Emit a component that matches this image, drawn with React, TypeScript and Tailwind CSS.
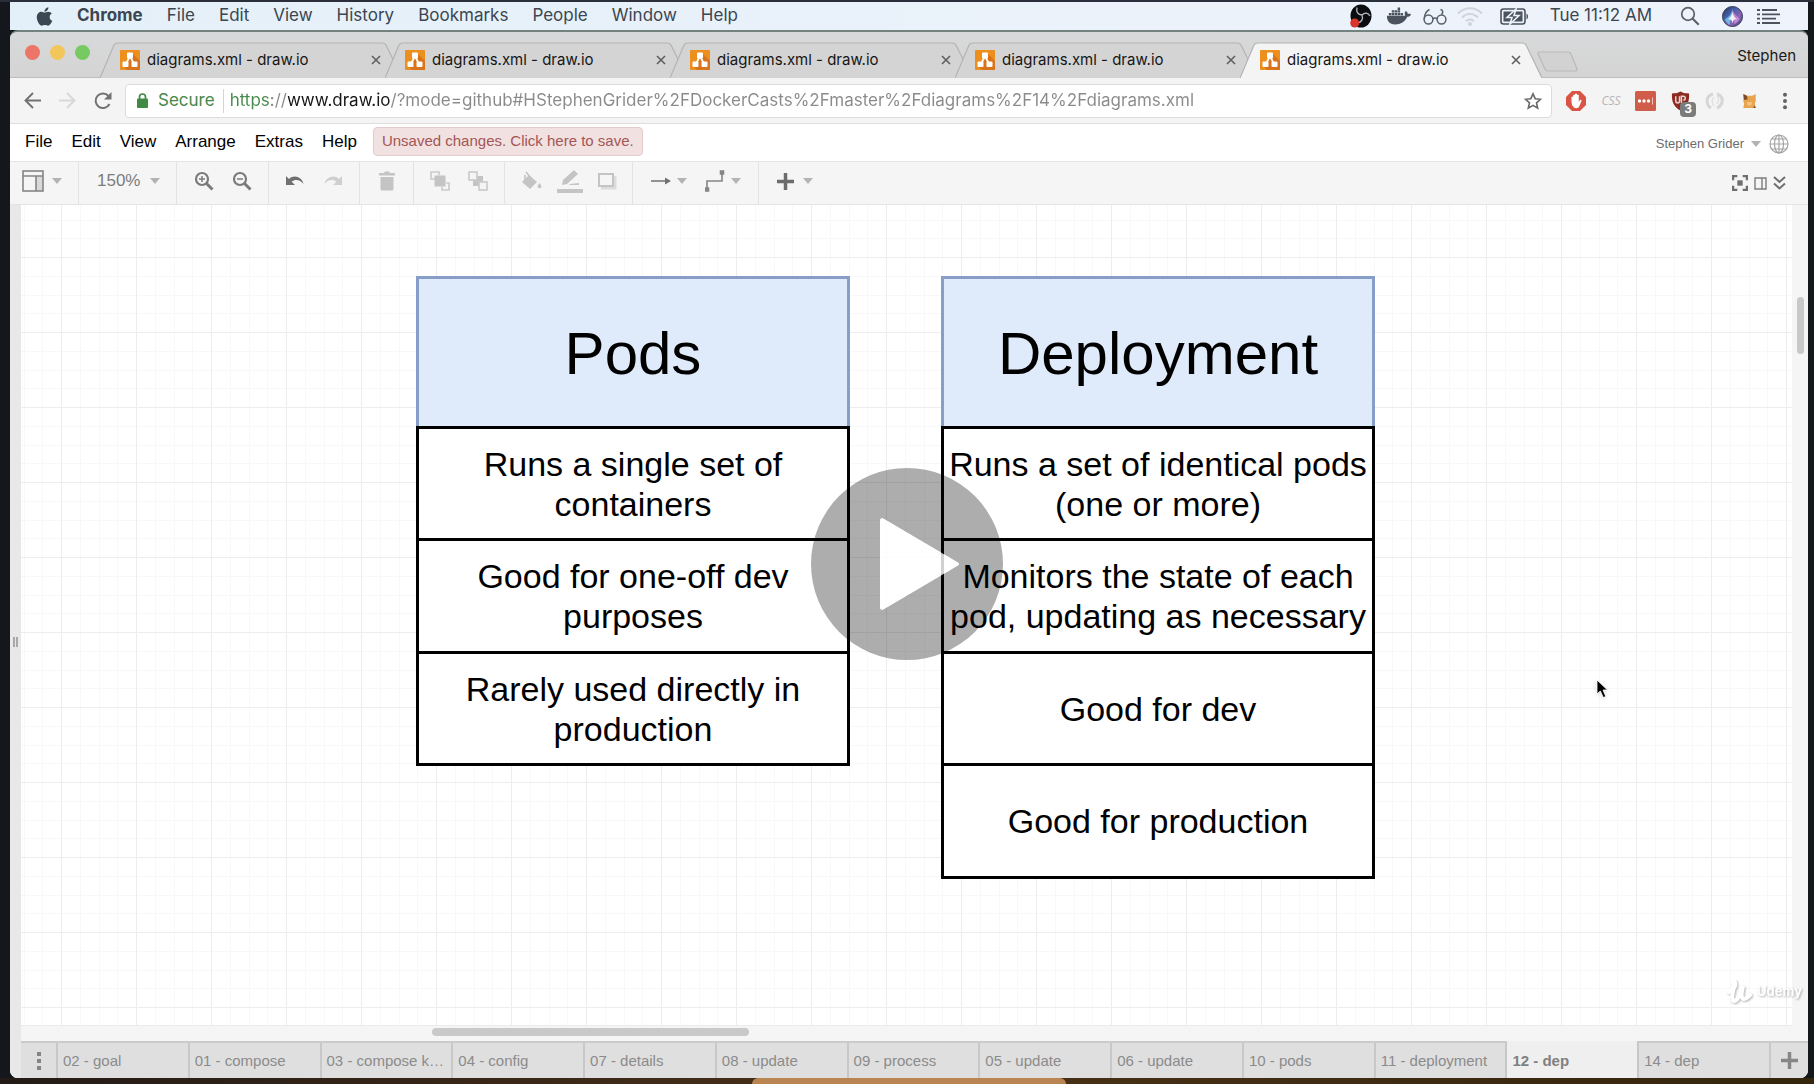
import React from "react";
import { FaApple, FaDocker } from "react-icons/fa";

const SANS = "font-['Liberation_Sans',Arial,sans-serif]";
const SYS = "font-[Inter,'Liberation_Sans',sans-serif]";

const systemMenus = ["File", "Edit", "View", "History", "Bookmarks", "People", "Window", "Help"];
const editorMenus = ["File", "Edit", "View", "Arrange", "Extras", "Help"];
const browserTabs = [1, 2, 3, 4, 5];
const pages = [
  "02 - goal",
  "01 - compose",
  "03 - compose k…",
  "04 - config",
  "07 - details",
  "08 - update",
  "09 - process",
  "05 - update",
  "06 - update",
  "10 - pods",
  "11 - deployment",
  "12 - dep",
  "14 - dep",
];

function ObsIcon() {
  return (
    <svg width="22" height="24" viewBox="0 0 22 24">
      <ellipse cx="11" cy="12" rx="10.5" ry="11.500" fill="#0b0c10" />
      <path
        d="M7 3.500c-1 4.500 1 7.500 5 7.500M12 11c3-3 6-2.500 8 1M12 11c1.500 4-.5 7-4 8"
        stroke="#b9bdc4"
        strokeWidth="1.300"
        fill="none"
      />
      <circle cx="4.700" cy="19" r="4.500" fill="#d8362a" />
    </svg>
  );
}

function GlassesIcon() {
  return (
    <svg width="24" height="17" viewBox="0 0 24 17" fill="none" stroke="#59626c" strokeWidth="1.500">
      <circle cx="5.500" cy="11.500" r="4.400" />
      <circle cx="18.500" cy="11.500" r="4.400" />
      <path d="M9.900 11c1-1.500 3.200-1.500 4.200 0M1.200 11C1.500 7 3 3 6.500 1.500M18.500 7C20.500 4 20 2 17.500 1.500" />
    </svg>
  );
}

function WifiIcon() {
  return (
    <svg width="26" height="20" viewBox="0 0 26 20" fill="none" stroke="#cfd4dc" strokeWidth="2">
      <path d="M1 7.500c7-7 17-7 24 0M5 11.500c5-4.600 11-4.600 16 0M9 15.200c2.500-2.200 5.500-2.200 8 0" />
      <circle cx="13" cy="18" r="1" fill="#cfd4dc" />
    </svg>
  );
}

function BatteryIcon() {
  return (
    <svg width="30" height="17" viewBox="0 0 30 17">
      <rect x="1" y="1" width="24" height="15" rx="2.500" fill="none" stroke="#4a535e" strokeWidth="1.600" />
      <rect x="3.500" y="3.500" width="19" height="10" fill="#4a535e" />
      <path d="M26.500 5.500v6c2-.8 2-5.200 0-6z" fill="#4a535e" />
      <path d="m16 1-9 8.500h5L10 16l9-8.500h-5z" fill="#4a535e" stroke="#edf2f9" strokeWidth="1.600" />
    </svg>
  );
}

function SearchIcon() {
  return (
    <svg width="20" height="20" viewBox="0 0 20 20" fill="none" stroke="#59626c" strokeWidth="1.700">
      <circle cx="8" cy="8" r="6.300" />
      <path d="m12.700 12.700 6 6" strokeWidth="2.200" />
    </svg>
  );
}

function SiriIcon() {
  return (
    <svg width="21" height="21" viewBox="0 0 22 22">
      <defs>
        <linearGradient id="siri" x1="0" y1="0" x2="1" y2="1">
          <stop offset="0" stopColor="#2a2f52" />
          <stop offset=".35" stopColor="#3f5fa8" />
          <stop offset=".65" stopColor="#8f62b8" />
          <stop offset="1" stopColor="#2c3f78" />
        </linearGradient>
      </defs>
      <circle cx="11" cy="11" r="10.500" fill="url(#siri)" stroke="#33374d" />
      <path d="M11 3c-1 5-3 8-8 11 1 3 3 5 5 6 0-3 1-5 3-8z" fill="#6fc4e8" opacity=".85" />
      <path d="M11 3c1 5 4 8 8 10-2 3-4 5-6 6 0-3-1-5-2-7z" fill="#cf8fd6" opacity=".8" />
      <path d="M11 6c.7 4 2 6 5 8-3-.5-4 0-5 4-1-4-2-4.500-5-4 3-2 4.300-4 5-8z" fill="#f3eefc" />
    </svg>
  );
}

function ListIcon() {
  return (
    <svg width="23" height="17" viewBox="0 0 23 17" stroke="#4a535e" strokeWidth="1.800">
      <path d="M5 2h15M5 6.300h18M5 10.700h14M5 15h18" />
      <path d="M0 2h3M0 6.300h3M0 10.700h3M0 15h3" />
    </svg>
  );
}

function DrawioIcon() {
  return (
    <svg width="20" height="20" viewBox="0 0 20 20" className="shrink-0">
      <rect width="20" height="20" rx="1" fill="#ec8f1c" />
      <path d="m12 3 8 8v9H7l-4-4 6-6z" fill="#d9741a" />
      <path d="M10 6 6 14M10 6l4 8" stroke="#fff" strokeWidth="1.700" />
      <rect x="7" y="2.500" width="6" height="6" rx="1" fill="#fff" />
      <rect x="2.500" y="11.500" width="6" height="5.500" rx="1" fill="#fff" />
      <rect x="11.500" y="11.500" width="6" height="5.500" rx="1" fill="#fff" />
    </svg>
  );
}

function CloseIcon() {
  return (
    <svg width="10" height="10" viewBox="0 0 10 10" stroke="#5f5f5f" strokeWidth="1.600">
      <path d="m1 1 8 8M9 1 1 9" />
    </svg>
  );
}

function BrowserTab({ active }: { active: boolean }) {
  return (
    <div className={`relative -mr-[17px] flex h-9 w-[302px] items-center px-5 ${active ? "z-10" : ""}`}>
      <svg className="absolute inset-0 h-full w-full" viewBox="0 0 302 36" preserveAspectRatio="none">
        <path
          d="M0 36 14 3Q15 1 18 1H282Q285 1 286 3L302 36"
          fill={active ? "#f4f4f4" : "#d4d4d4"}
          stroke="#b4b4b4"
          strokeWidth="1.200"
        />
      </svg>
      <button className="relative flex flex-1 items-center gap-[7px] text-left text-[15px] text-[#161616]">
        <DrawioIcon />
        <span>diagrams.xml - draw.io</span>
      </button>
      <button aria-label="Close tab" className="relative mr-px">
        <CloseIcon />
      </button>
    </div>
  );
}

function Caret() {
  return <span className="h-0 w-0 border-x-[5px] border-t-[6px] border-x-transparent border-t-[#b3b3b3]" />;
}

function ToolButton({ label, className = "", children }: { label: string; className?: string; children: React.ReactNode }) {
  return (
    <button aria-label={label} className={`flex items-center justify-center ${className}`}>
      {children}
    </button>
  );
}

function Magnifier({ plus }: { plus: boolean }) {
  return (
    <svg width="20" height="20" viewBox="0 0 20 20" fill="none" stroke="#7a7a7a" strokeWidth="2.200">
      <circle cx="8" cy="8" r="6" />
      <path d="m12.500 12.500 6 6" strokeWidth="3" />
      <path d={plus ? "M5 8h6M8 5v6" : "M5 8h6"} strokeWidth="1.500" />
    </svg>
  );
}

function UndoIcon({ flip }: { flip: boolean }) {
  return (
    <svg width="20" height="14" viewBox="0 0 20 14" className={flip ? "-scale-x-100" : ""}>
      <path d="M1 2v9h9L6.700 7.800C10 5 15 5.500 18.500 10 17 3 9 0 4 5z" fill={flip ? "#cfcfcf" : "#707070"} />
    </svg>
  );
}

function Toolbar() {
  const group = "flex h-full items-center border-r border-[#e2e2e2]";
  return (
    <div className={`flex h-11 shrink-0 items-center border-y border-[#e4e4e4] bg-[#f5f5f5] text-[#7c7c7c] ${SANS}`}>
      <div className="flex h-full items-center">
        <div className={`${group} w-[69px] pb-1 pl-3`}>
          <ToolButton label="View layout" className="gap-2">
            <svg width="22" height="22" viewBox="0 0 22 22" fill="none" stroke="#858585" strokeWidth="1.600">
              <rect x="14" y="6" width="7" height="15" fill="#d9d9d9" stroke="none" />
              <rect x="1" y="1" width="20" height="20" />
              <path d="M1 6h20M14 6v15" />
            </svg>
            <Caret />
          </ToolButton>
        </div>
        <div className={`${group} w-[98px] pb-1 pl-[18px]`}>
          <button className="flex items-center gap-[10px] text-[17px]">
            150%
            <Caret />
          </button>
        </div>
        <div className={`${group} w-[92px] justify-center gap-[18px] pb-1`}>
          <ToolButton label="Zoom in"><Magnifier plus /></ToolButton>
          <ToolButton label="Zoom out"><Magnifier plus={false} /></ToolButton>
        </div>
        <div className={`${group} w-[91px] justify-center gap-[18px] pb-1`}>
          <ToolButton label="Undo"><UndoIcon flip={false} /></ToolButton>
          <ToolButton label="Redo"><UndoIcon flip /></ToolButton>
        </div>
        <div className={`${group} w-[54px] justify-center pb-1`}>
          <ToolButton label="Delete">
            <svg width="18" height="20" viewBox="0 0 18 20" fill="#c4c4c4">
              <path d="M1 2h5l1-1.500h4L12 2h5v2.500H1zM2.500 6h13v12q0 1.500-1.500 1.500H4Q2.500 19.500 2.500 18z" />
            </svg>
          </ToolButton>
        </div>
        <div className={`${group} w-[91px] justify-center gap-[18px] pb-1`}>
          <ToolButton label="To front">
            <svg width="20" height="20" viewBox="0 0 20 20" fill="none" stroke="#cacaca" strokeWidth="1.600">
              <path d="M5 8H1V1h8v3M16 12h3v7h-7v-3" />
              <rect x="4.500" y="4.500" width="11" height="11" fill="#c4c4c4" stroke="none" />
            </svg>
          </ToolButton>
          <ToolButton label="To back">
            <svg width="20" height="20" viewBox="0 0 20 20" fill="none" stroke="#cacaca" strokeWidth="1.600">
              <rect x="5" y="5" width="10" height="10" fill="#c4c4c4" stroke="none" />
              <rect x="1" y="1" width="8" height="8" fill="#f5f5f5" />
              <rect x="11" y="11" width="8" height="8" fill="#f5f5f5" />
            </svg>
          </ToolButton>
        </div>
        <div className={`${group} w-[128px] justify-center gap-[14px] pb-1`}>
          <ToolButton label="Fill color">
            <svg width="22" height="20" viewBox="0 0 22 20">
              <path d="m8 4 8 7-7 7-8-7z" fill="#c4c4c4" />
              <path d="m5 1 5 6M4 9V4" stroke="#c4c4c4" strokeWidth="1.600" />
              <path d="M18.500 12c3 4 2 5 0 5s-3-1 0-5z" fill="#c4c4c4" />
            </svg>
          </ToolButton>
          <ToolButton label="Line color">
            <svg width="26" height="24" viewBox="0 0 26 24" fill="#c4c4c4">
              <path d="m5 16 1-5L17 1l4 4-11 10zM0 20h26v4H0zM13 15l9-1v2h-10z" />
            </svg>
          </ToolButton>
          <ToolButton label="Shadow">
            <svg width="20" height="18" viewBox="0 0 20 18" fill="none">
              <path d="M4 16h14V4" stroke="#dcdcdc" strokeWidth="3" />
              <rect x="2" y="2" width="14" height="12" stroke="#c4c4c4" strokeWidth="2" fill="#f5f5f5" />
            </svg>
          </ToolButton>
        </div>
        <div className={`${group} w-[126px] justify-center gap-[18px] pb-1`}>
          <ToolButton label="Connection" className="gap-[6px]">
            <svg width="20" height="10" viewBox="0 0 20 10">
              <path d="M0 5h16" stroke="#707070" strokeWidth="1.500" />
              <path d="m14 1.500 6 3.500-6 3.500z" fill="#707070" />
            </svg>
            <Caret />
          </ToolButton>
          <ToolButton label="Waypoints" className="gap-[6px]">
            <svg width="20" height="22" viewBox="0 0 20 22" fill="none" stroke="#858585" strokeWidth="1.600">
              <path d="M2 18v-7h15V4" />
              <path d="M.5 18h3v3h-3zM15.500 1h3v3h-3z" fill="#858585" />
            </svg>
            <Caret />
          </ToolButton>
        </div>
        <div className="flex h-full items-center pb-1 pl-[18px]">
          <ToolButton label="Insert" className="gap-[9px]">
            <svg width="17" height="17" viewBox="0 0 17 17" stroke="#6c6c6c" strokeWidth="3.500">
              <path d="M8.500 0v17M0 8.500h17" />
            </svg>
            <Caret />
          </ToolButton>
        </div>
      </div>
      <div className="ml-auto mr-[22px] flex items-center gap-[6px]">
        <ToolButton label="Fullscreen">
          <svg width="16" height="16" viewBox="0 0 15 15" fill="none" stroke="#6f6f6f" strokeWidth="2.200">
            <path d="M1 5V1h4M10 1h4v4M14 10v4h-4M5 14H1v-4" />
            <rect x="5" y="5" width="5" height="5" fill="#6f6f6f" stroke="none" />
          </svg>
        </ToolButton>
        <ToolButton label="Format panel">
          <svg width="13" height="13" viewBox="0 0 13 13" fill="none" stroke="#7d7d7d" strokeWidth="1.400">
            <path d="M1 1h11v11H1zM8 1v11" />
          </svg>
        </ToolButton>
        <ToolButton label="Collapse">
          <svg width="13" height="14" viewBox="0 0 13 14" fill="none" stroke="#6f6f6f" strokeWidth="2">
            <path d="m1 1 5.500 5L12 1M1 7.500l5.500 5 5.500-5" />
          </svg>
        </ToolButton>
      </div>
    </div>
  );
}

function Extensions() {
  return (
    <div className="flex w-[256px] items-center pl-[14px]">
      <button aria-label="Ad blocker">
        <svg width="20" height="20" viewBox="0 0 20 20">
          <path d="M6 0h8l6 6v8l-6 6H6l-6-6V6z" fill="#d95445" />
          <path d="M5.500 11V6q.9-1.200 1.700 0V4q.9-1.200 1.800 0V3q1-1.200 2 0v1.200q1-1.200 1.800 0V11l1.200-2q1.500-.5 1.600.7L13 16Q10 18.500 7.500 16 5.500 14 5.500 11z" fill="#fff" />
        </svg>
      </button>
      <button className="ml-[14px] w-[22px] text-center font-['Open_Sans',sans-serif] text-[12px] italic text-[#b4b4b4]">CSS</button>
      <button aria-label="Password manager" className="ml-[13px]">
        <svg width="21" height="20" viewBox="0 0 21 20">
          <rect width="21" height="20" rx="1.500" fill="#d05c4a" />
          <circle cx="4.500" cy="10" r="1.700" fill="#fff" />
          <circle cx="9" cy="10" r="1.700" fill="#fff" />
          <circle cx="13.500" cy="10" r="1.700" fill="#fff" />
          <path d="M17.500 6.500v7" stroke="#f0c4bc" />
        </svg>
      </button>
      <button aria-label="Content blocker" className="relative ml-[15px]">
        <svg width="19" height="20" viewBox="0 0 20 20">
          <path d="M10 0c3 2 6 2 9 2 .5 9-2 14-9 18C3 16 .5 11 1 2c3 0 6 0 9-2z" fill="#8c2a20" />
          <path d="M5 5v5q0 2 2 2t2-2V5M11 12V5h2q2 0 2 2t-2 2" stroke="#e9d2cf" strokeWidth="1.600" fill="none" />
        </svg>
        <span className="absolute -bottom-[6px] -right-[6px] flex h-[15px] w-4 items-center justify-center rounded-sm bg-[#7b7b7b] text-[12px] font-bold text-white">
          3
        </span>
      </button>
      <button aria-label="Feed" className="ml-[15px]">
        <svg width="20" height="18" viewBox="0 0 20 18" fill="none" stroke="#d6d6d6" strokeWidth="3">
          <path d="M8 2C0 4 1 13 6 16M12 2c8 3 6 11 0 14" />
          <path d="M9 5c-3 3-2 6 0 9M12 4q3 4 0 8" stroke="#e2e2e2" strokeWidth="1.500" />
        </svg>
      </button>
      <button aria-label="Cat" className="ml-[17px]">
        <svg width="15" height="16" viewBox="0 0 16 18">
          <path d="m1 1 4 2h6l4-2v8l-1 3 1 5H1l1-5-1-3z" fill="#e8a44f" />
          <path d="m1 1 4 2 1 4-4 1zM14 14l1 3h-3z" fill="#7a4c2c" />
          <path d="M5 10h6l-1 4H6z" fill="#f2c47c" />
        </svg>
      </button>
      <button aria-label="Browser menu" className="ml-[25px]">
        <svg width="6" height="18" viewBox="0 0 6 20" fill="#626262">
          <circle cx="3" cy="3" r="2.200" />
          <circle cx="3" cy="10" r="2.200" />
          <circle cx="3" cy="17" r="2.200" />
        </svg>
      </button>
    </div>
  );
}

function Table({ title, rows, className }: { title: string; rows: string[][]; className: string }) {
  return (
    <section className={`absolute top-[71px] w-[434px] text-center text-black ${className}`}>
      <h2 className="flex h-[150px] items-center justify-center border-x-3 border-t-3 border-[#879fc8] bg-[#dfeafa] pt-[2px] text-[60px] leading-[72px]">
        {title}
      </h2>
      <ul className="border-b-3 border-black bg-white">
        {rows.map((lines, i) => (
          <li
            key={i}
            className={`flex flex-col items-center justify-center whitespace-nowrap border-x-3 border-t-3 border-black text-[34px] leading-10 ${
              i % 2 ? "h-[113px]" : "h-[112px]"
            }`}
          >
            {lines.map((line) => (
              <span key={line}>{line}</span>
            ))}
          </li>
        ))}
      </ul>
    </section>
  );
}

function Canvas() {
  return (
    <main className="flex min-h-0 flex-1 bg-[#f5f5f5]">
      <div className="flex w-[11px] items-center justify-center bg-[#e8e8e8]">
        <span className="h-[10px] w-[5px] border-x-2 border-[#a8a8a8]" />
      </div>
      <div className="flex min-w-0 flex-1 flex-col">
        <div className="flex min-h-0 flex-1">
          <div
            className={`relative min-w-0 flex-1 overflow-hidden bg-white bg-size-[75px_75px] bg-position-[40px_52px] bg-[linear-gradient(to_right,#ededed_1px,transparent_1px),linear-gradient(to_bottom,#ededed_1px,transparent_1px),linear-gradient(to_right,transparent_19px,#f8f8f8_19px,#f8f8f8_20px,transparent_20px,transparent_38px,#f8f8f8_38px,#f8f8f8_39px,transparent_39px,transparent_56px,#f8f8f8_56px,#f8f8f8_57px,transparent_57px),linear-gradient(to_bottom,transparent_19px,#f8f8f8_19px,#f8f8f8_20px,transparent_20px,transparent_38px,#f8f8f8_38px,#f8f8f8_39px,transparent_39px,transparent_56px,#f8f8f8_56px,#f8f8f8_57px,transparent_57px)] ${SANS}`}
          >
            <Table
              title="Pods"
              className="left-[395px]"
              rows={[
                ["Runs a single set of", "containers"],
                ["Good for one-off dev", "purposes"],
                ["Rarely used directly in", "production"],
              ]}
            />
            <Table
              title="Deployment"
              className="left-[920px]"
              rows={[
                ["Runs a set of identical pods", "(one or more)"],
                ["Monitors the state of each", "pod, updating as necessary"],
                ["Good for dev"],
                ["Good for production"],
              ]}
            />
            <svg className="absolute left-[1575px] top-[474px] drop-shadow-sm" width="13" height="20" viewBox="0 0 13 20">
              <path d="M1 1v14l3.300-3 3 6.500 2.500-1L7 11h4.500z" fill="#000" stroke="#fff" strokeWidth=".8" />
            </svg>
          </div>
          <div className="w-4 bg-[#f5f5f5] pt-[92px]">
            <div className="mx-auto h-[57px] w-[7px] rounded-full bg-[#c8c8c8]" />
          </div>
        </div>
        <div className="mr-4 h-4 border-t border-[#ebebeb] pt-[2px]">
          <div className="ml-[411px] h-2 w-[317px] rounded-full bg-[#c9c9c9]" />
        </div>
        <nav className={`flex h-[37px] border-t-2 border-[#cbcbcb] bg-[#dfdfdf] text-[15px] text-[#8b8b8b] ${SANS}`}>
          <button aria-label="Pages" className="flex w-[37px] items-center justify-center border-r-2 border-[#c8c8c8]">
            <svg width="4" height="18" viewBox="0 0 4 18" fill="#848484">
              <path d="M0 0h4v4H0zM0 7h4v4H0zM0 14h4v4H0z" />
            </svg>
          </button>
          {pages.map((page) => (
            <button
              key={page}
              className={`min-w-0 flex-1 whitespace-nowrap border-r-2 border-[#c8c8c8] pl-[5px] text-left ${
                page === "12 - dep" ? "-mt-[2px] bg-[#efefef] pt-1 font-bold text-[#808080]" : "pt-[2px]"
              }`}
            >
              {page}
            </button>
          ))}
          <button aria-label="Add page" className="flex w-[37px] items-center justify-center">
            <svg width="17" height="17" viewBox="0 0 17 17" stroke="#868686" strokeWidth="3.500">
              <path d="M8.500 0v17M0 8.500h17" />
            </svg>
          </button>
        </nav>
      </div>
    </main>
  );
}

export default function App() {
  return (
    <div className={`relative flex h-screen flex-col overflow-hidden bg-[#14181c] pl-[10px] pr-[6px] ${SYS}`}>
      <div className="-ml-[10px] -mr-[6px] h-[2px] shrink-0 bg-[#2b2e3b]" />
      <header className="flex h-7 shrink-0 items-center bg-gradient-to-r from-[#e4f0f9] to-[#eff3fb] text-[17px] text-[#3b4651]">
        <nav className="flex items-center gap-6 pl-6">
          <button aria-label="Apple menu"><FaApple size={21} className="-mr-[2px] text-[#3b4753]" /></button>
          <button className="font-bold">Chrome</button>
          {systemMenus.map((m) => (
            <button key={m}>{m}</button>
          ))}
        </nav>
        <div className="ml-auto flex items-center pr-7">
          <ObsIcon />
          <FaDocker size={24} className="ml-[15px] text-[#4a535e]" />
          <span className="ml-3"><GlassesIcon /></span>
          <span className="ml-[10px]"><WifiIcon /></span>
          <span className="ml-[17px]"><BatteryIcon /></span>
          <time className="ml-5">Tue 11:12 AM</time>
          <button aria-label="Search" className="ml-7"><SearchIcon /></button>
          <span className="ml-[22px]"><SiriIcon /></span>
          <button aria-label="Notifications" className="ml-[14px]"><ListIcon /></button>
        </div>
      </header>

      <div className="flex min-h-0 flex-1 flex-col overflow-hidden rounded-lg border-t-2 border-[#73827f] bg-[#d6d6d6]">
        <div className="flex h-[46px] shrink-0 items-end border-b border-[#bdbdbd] bg-gradient-to-b from-[#d8d9da] to-[#d4d4d4]">
          <div className="flex h-full w-[90px] items-center gap-[10px] pb-1 pl-[15px]">
            <button aria-label="Close" className="h-[15px] w-[15px] rounded-full bg-[#ec7568]" />
            <button aria-label="Minimize" className="h-[15px] w-[15px] rounded-full bg-[#f3c65c]" />
            <button aria-label="Zoom" className="h-[15px] w-[15px] rounded-full bg-[#76ca61]" />
          </div>
          <div className="-mb-px flex">
            {browserTabs.map((n) => (
              <BrowserTab key={n} active={n === 5} />
            ))}
          </div>
          <button aria-label="New tab" className="mb-[5px] ml-3">
            <svg width="42" height="21" viewBox="0 0 42 21">
              <path d="M3 1h28q2 0 3 2l6 15q0 2-2 2H11q-2 0-3-2L1 3q0-2 2-2z" fill="#d2d2d2" stroke="#b9b9b9" strokeWidth="1.200" />
            </svg>
          </button>
          <button className="mb-[10px] ml-auto mr-3 text-[15px] text-[#1a1a1a]">Stephen</button>
        </div>

        <div className="flex h-[46px] shrink-0 items-center border-b border-[#dedede] bg-[#f4f4f4]">
          <div className="flex w-[115px] items-center gap-[18px] pl-[14px]">
            <button aria-label="Back">
              <svg width="17" height="17" viewBox="0 0 17 17" fill="none" stroke="#727272" strokeWidth="1.900">
                <path d="M17 8.500H2M9 1 1.500 8.500 9 16" />
              </svg>
            </button>
            <button aria-label="Forward">
              <svg width="17" height="17" viewBox="0 0 17 17" fill="none" stroke="#d8d8d8" strokeWidth="1.900">
                <path d="M0 8.500h15M8 1l7.500 7.500L8 16" />
              </svg>
            </button>
            <button aria-label="Reload">
              <svg width="18" height="18" viewBox="0 0 18 18" fill="none" stroke="#727272" strokeWidth="2">
                <path d="M15.500 12A7.300 7.300 0 1 1 14.500 4" />
                <path d="M17.500 0v7.500H10z" fill="#727272" stroke="none" />
              </svg>
            </button>
          </div>
          <div className="flex h-[34px] min-w-0 flex-1 items-center rounded border border-[#dcdcdc] bg-white pl-[11px] pr-[9px] text-[17px]">
            <svg width="11" height="15" viewBox="0 0 11 15">
              <rect y="5.500" width="11" height="9.500" rx="1" fill="#3f8a45" />
              <path d="M2.500 6V4a3 3 0 0 1 6 0v2" stroke="#3f8a45" strokeWidth="1.700" fill="none" />
            </svg>
            <span className="ml-[10px] text-[#45894a]">Secure</span>
            <span className="ml-2 h-6 w-px bg-[#d5d5d5]" />
            <input
              aria-label="Address"
              className="ml-[6px] min-w-0 flex-1 bg-[linear-gradient(to_right,#45894a_42px,#8a8a8a_42px,#8a8a8a_58px,#161616_58px,#161616_161px,#8a8a8a_161px)] bg-clip-text text-transparent outline-none"
              defaultValue="https://www.draw.io/?mode=github#HStephenGrider%2FDockerCasts%2Fmaster%2Fdiagrams%2F14%2Fdiagrams.xml"
            />
            <button aria-label="Bookmark">
              <svg width="18" height="18" viewBox="0 0 18 18" fill="none" stroke="#6a6a6a" strokeWidth="1.600">
                <path d="m9 1.800 2.200 4.900 5.300.6-4 3.600 1.200 5.300L9 13.400l-4.700 2.800 1.200-5.300-4-3.600 5.300-.6z" />
              </svg>
            </button>
          </div>
          <Extensions />
        </div>

        <div className={`flex h-[37px] shrink-0 items-center bg-white pb-[2px] ${SANS}`}>
          <nav className="flex items-center gap-[19px] pl-[15px] text-[17px] text-black">
            {editorMenus.map((m) => (
              <button key={m}>{m}</button>
            ))}
          </nav>
          <button className="mb-px ml-4 h-[29px] whitespace-nowrap rounded-sm border border-[#e3cccc] bg-[#f1e1e1] px-2 text-[15px] text-[#a45654]">
            Unsaved changes. Click here to save.
          </button>
          <div className="ml-auto flex items-center pr-[19px] pt-1">
            <button className="flex items-center gap-[7px] text-[13px] text-[#6c6c6c]">
              Stephen Grider
              <Caret />
            </button>
            <button aria-label="Language" className="ml-2">
              <svg width="20" height="20" viewBox="0 0 20 20" fill="none" stroke="#a3a3a3" strokeWidth="1.200">
                <circle cx="10" cy="10" r="9" />
                <ellipse cx="10" cy="10" rx="4.500" ry="9" />
                <path d="M10 1v18M1 10h18M2.500 5h15M2.500 15h15" />
              </svg>
            </button>
          </div>
        </div>

        <Toolbar />
        <Canvas />
      </div>

      <div className="-ml-[10px] -mr-[6px] flex h-[6px] shrink-0 justify-center bg-gradient-to-r from-[#241b16] via-[#4a3117] to-[#33260d] pl-1">
        <div className="h-full w-[314px] rounded-t-md bg-[#b98552]" />
      </div>

      <button aria-label="Play" className="absolute left-1/2 top-[468px] -translate-x-1/2">
        <svg width="192" height="192" viewBox="0 0 192 192">
          <path
            fillRule="evenodd"
            d="M96 0a96 96 0 1 1 0 192a96 96 0 1 1 0-192zM69 53v86q0 4 4 2l73-43q4-2 0-4L73 51q-4-2-4 2z"
            fill="#000"
            fillOpacity=".32"
          />
          <path d="M69 53v86q0 4 4 2l73-43q4-2 0-4L73 51q-4-2-4 2z" fill="#fff" fillOpacity=".82" />
        </svg>
      </button>

      <div className="absolute bottom-[80px] right-3 flex items-center gap-1 text-[13px] font-bold text-white drop-shadow-[1px_1px_1px_rgba(0,0,0,0.3)]">
        <svg width="26" height="24" viewBox="0 0 26 24" fill="none" stroke="#fff" strokeWidth="4" strokeLinecap="round">
          <path d="M2 12C7 9 9 6 8 3c-1 5-5 17-1 18 4 0 7-9 9-15-2 8-2 13 1 13 3 0 4-2 6-4" />
        </svg>
        Udemy
      </div>
    </div>
  );
}
